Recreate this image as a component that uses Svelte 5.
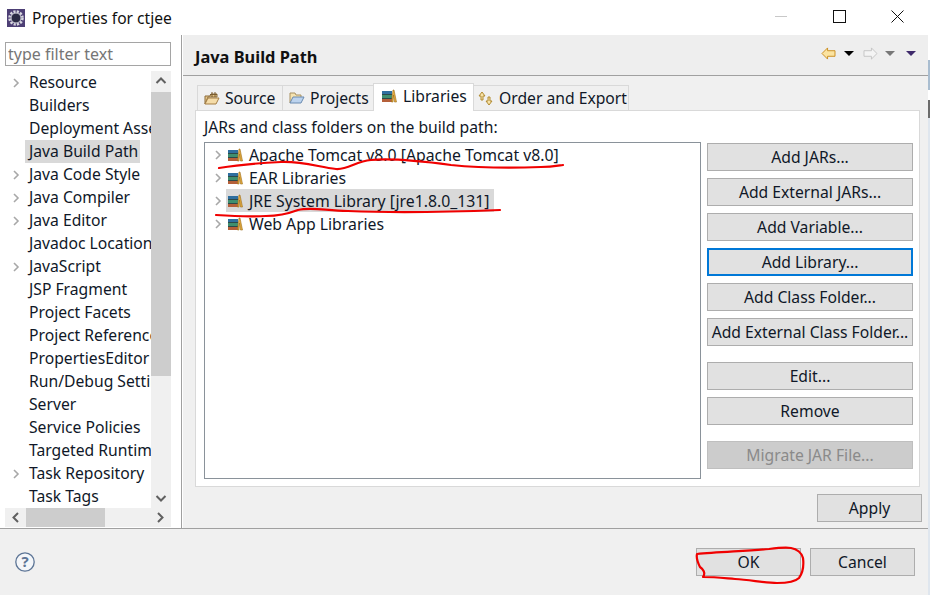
<script>
  // Preference tree on the left, build path page on the right
  const tree = [
    { name: 'Resource', arrow: true },
    { name: 'Builders' },
    { name: 'Deployment Assembly' },
    { name: 'Java Build Path', selected: true },
    { name: 'Java Code Style', arrow: true },
    { name: 'Java Compiler', arrow: true },
    { name: 'Java Editor', arrow: true },
    { name: 'Javadoc Location' },
    { name: 'JavaScript', arrow: true },
    { name: 'JSP Fragment' },
    { name: 'Project Facets' },
    { name: 'Project References' },
    { name: 'PropertiesEditor' },
    { name: 'Run/Debug Settings' },
    { name: 'Server' },
    { name: 'Service Policies' },
    { name: 'Targeted Runtimes' },
    { name: 'Task Repository', arrow: true },
    { name: 'Task Tags' }
  ];

  const libraries = [
    { name: 'Apache Tomcat v8.0 [Apache Tomcat v8.0]' },
    { name: 'EAR Libraries' },
    { name: 'JRE System Library [jre1.8.0_131]', selected: true },
    { name: 'Web App Libraries' }
  ];

  const buttonGroups = [
    [
      { label: 'Add JARs...' },
      { label: 'Add External JARs...' },
      { label: 'Add Variable...' },
      { label: 'Add Library...', focused: true },
      { label: 'Add Class Folder...' },
      { label: 'Add External Class Folder...' }
    ],
    [{ label: 'Edit...' }, { label: 'Remove' }],
    [{ label: 'Migrate JAR File...', disabled: true }]
  ];
</script>

{#snippet chevron()}
  <svg class="chevron" width="8" height="10" viewBox="0 0 8 10"><path d="M2 1l4 4-4 4" fill="none" stroke="#a8a8a8" stroke-width="1.6" /></svg>
{/snippet}

{#snippet books()}
  <svg class="books" width="16" height="14" viewBox="0 0 16 14">
    <rect x="1" y="10" width="10" height="3" fill="#b5603a" />
    <rect x="1" y="6" width="10" height="3" fill="#3f8f6f" />
    <rect x="1" y="2" width="10" height="3" fill="#2f6f9f" />
    <path d="M1 5.500h10M1 9.500h10" stroke="#2b4a4a" stroke-width="1" />
    <path d="M10.500 13L12 1h1l2.500 12h-2L12.500 6 12 13z" fill="#e6ad3c" stroke="#9a6c1c" stroke-width="0.600" />
  </svg>
{/snippet}

<div class="window">
  <div class="dialog">
    <header class="titlebar">
      <svg class="app-icon" width="18" height="18" viewBox="0 0 18 18">
        <rect width="18" height="18" fill="#4d3f75" />
        <circle cx="9" cy="9" r="6.500" fill="none" stroke="#d8d8e0" stroke-width="2.500" stroke-dasharray="2.200 1.200" />
        <circle cx="9" cy="9" r="5" fill="#2a2a44" stroke="#cfcfd8" stroke-width="1" />
      </svg>
      <span class="title">Properties for ctjee</span>
      <div class="window-controls">
        <span class="minimize"></span>
        <span class="maximize"></span>
        <svg width="13" height="13" viewBox="0 0 13 13"><path d="M.5.500l12 12M12.500.500l-12 12" stroke="#111" stroke-width="1" /></svg>
      </div>
    </header>

    <div class="main">
      <aside class="sidebar">
        <input class="filter" placeholder="type filter text" readonly />
        <div class="tree-wrap">
          <ul class="tree">
            {#each tree as item}
              <li class="tree-row">
                <span class="arrow-slot">
                  {#if item.arrow}{@render chevron()}{/if}
                </span>
                <span class="tree-label" class:selected={item.selected}>{item.name}</span>
              </li>
            {/each}
          </ul>
          <div class="vscroll">
            <svg class="scroll-btn" width="20" height="21" viewBox="0 0 20 21"><path d="M5.500 12l4.500-4.500 4.500 4.500" fill="none" stroke="#606060" stroke-width="2" /></svg>
            <div class="vthumb"></div>
            <div class="spacer"></div>
            <svg class="scroll-btn" width="20" height="21" viewBox="0 0 20 21"><path d="M5.500 9l4.500 4.500 4.500-4.500" fill="none" stroke="#606060" stroke-width="2" /></svg>
          </div>
          <div class="hscroll">
            <svg width="21" height="19" viewBox="0 0 21 19"><path d="M13 5l-4.500 4.500 4.500 4.500" fill="none" stroke="#606060" stroke-width="2" /></svg>
            <div class="hthumb"></div>
            <div class="spacer"></div>
            <svg width="21" height="19" viewBox="0 0 21 19"><path d="M8 5l4.500 4.500-4.500 4.500" fill="none" stroke="#606060" stroke-width="2" /></svg>
          </div>
        </div>
      </aside>

      <section class="page">
        <div class="page-header">
          <h1>Java Build Path</h1>
          <div class="nav-icons">
            <svg width="15" height="13" viewBox="0 0 16 14"><path d="M1 7l6-6v3h8v6H7v3z" fill="#fbe3a0" stroke="#c98a1a" stroke-width="1" /></svg>
            <span class="caret black"></span>
            <svg width="15" height="13" viewBox="0 0 16 14"><path d="M15 7L9 1v3H1v6h8v3z" fill="#f4f4f4" stroke="#c4c4c4" stroke-width="1" /></svg>
            <span class="caret gray"></span>
            <span class="caret purple"></span>
          </div>
        </div>

        <div class="page-body">
          <div class="tabs">
            <div class="tab source">
              <svg width="16" height="14" viewBox="0 0 16 14">
                <path d="M1 5h5l1-2h6v3H4l-3 7z" fill="#e8c98a" stroke="#8a6a3a" stroke-width="1" />
                <path d="M1 13l3-6h11l-3 6z" fill="#f5dca8" stroke="#a57f45" stroke-width="1" />
                <path d="M8 1v5M11 1v5M6 3.500h7" stroke="#7a5c30" stroke-width="1" fill="none" />
              </svg>
              Source
            </div>
            <div class="tab projects">
              <svg width="16" height="14" viewBox="0 0 16 14">
                <path d="M1 12V2h5l1 2h5v2" fill="#f5e3b0" stroke="#a89060" stroke-width="1" />
                <path d="M1 12l3-6h11l-3 6z" fill="#bcd3ee" stroke="#6a8ab0" stroke-width="1" />
              </svg>
              Projects
            </div>
            <div class="tab active">
              {@render books()}
              Libraries
            </div>
            <div class="tab order">
              <svg width="16" height="15" viewBox="0 0 16 15">
                <path d="M4 1L1 5h2v4h2V5h2z" fill="#f8e3a8" stroke="#b08a30" stroke-width="1" />
                <path d="M11 14l3-4h-2V6h-2v4H8z" fill="#f8e3a8" stroke="#b08a30" stroke-width="1" />
              </svg>
              Order and Export
            </div>
          </div>

          <div class="panel">
            <div class="panel-caption">JARs and class folders on the build path:</div>
            <div class="panel-content">
              <ul class="libraries">
                {#each libraries as lib}
                  <li class="lib-row">
                    {@render chevron()}
                    <span class="lib-item" class:selected={lib.selected}>
                      {@render books()}
                      {lib.name}
                    </span>
                  </li>
                {/each}
              </ul>
              <div class="buttons">
                {#each buttonGroups as group}
                  <div class="button-group">
                    {#each group as b}
                      <button class="btn wide" class:focused={b.focused} class:disabled={b.disabled}>{b.label}</button>
                    {/each}
                  </div>
                {/each}
              </div>
            </div>
          </div>

          <div class="apply-row">
            <button class="btn action">Apply</button>
          </div>
        </div>
      </section>
    </div>

    <footer class="footer">
      <svg class="help" width="20" height="20" viewBox="0 0 20 20">
        <circle cx="10" cy="10" r="9.200" fill="#f4f6f9" stroke="#5d7596" stroke-width="1.300" />
        <text x="10" y="15" text-anchor="middle" class="help-mark">?</text>
      </svg>
      <div class="footer-actions">
        <button class="btn action">OK</button>
        <button class="btn action">Cancel</button>
      </div>
    </footer>
  </div>
  <div class="edge"></div>

  <!-- the red pen marks were drawn over the screenshot -->
  <svg class="ink" width="930" height="595" viewBox="0 0 930 595">
    <g fill="none" stroke="#f00000" stroke-width="2.200" stroke-linecap="round" stroke-linejoin="round">
      <path d="M219 168c18-3 40-5 62-6 20-1 38 5 55 7 12 1 20-8 35-9 22-2 50 1 80 5 30 3 62 3 90 2 10 0 15-1 22-2" />
      <path d="M216 215c14 1 34 2 50 1 14 0 24-3 32-6 12-3 24 0 50 1 50 2 100 1 152-1" />
      <path d="M697 554c20-2 50-3 72-5 8-1 16-2 22-1 6 1 11 5 12 10 1 8-1 16-4 20-3 3-10 5-22 5-12 0-26-3-42-4-12-1-20-2-32-2 3-4 0-8-3-10-2-4-4-9-3-13z" />
    </g>
  </svg>
</div>

<style>
  :global(body) {
    margin: 0;
    background: #fff;
  }

  .window {
    position: relative;
    display: flex;
    width: 930px;
    height: 595px;
    overflow: hidden;
    font-family: "Noto Sans", "Open Sans", sans-serif;
    font-size: 15.700px;
    color: #101828;
  }

  .dialog {
    display: flex;
    flex-direction: column;
    flex: 1;
    min-width: 0;
  }

  .edge {
    width: 2px;
    background: linear-gradient(#fff 0 60px, #a9bdd0 60px 90px, #fff 90px 100px, #6b6b6b 100px 118px, #dfe6ee 118px 595px);
  }

  .titlebar {
    display: flex;
    align-items: center;
    height: 35px;
    padding-left: 7px;
    background: #fff;
  }

  .app-icon {
    margin-right: 7px;
  }

  .title {
    font-size: 15.600px;
    color: #111;
  }

  .window-controls {
    display: flex;
    align-items: center;
    margin-left: auto;
    padding: 0 24px 3px 0;
  }

  .minimize {
    width: 12px;
    height: 1px;
    background: #c8c8c8;
    margin-right: 46px;
  }

  .maximize {
    width: 11px;
    height: 11px;
    border: 1px solid #111;
    margin-right: 45px;
  }

  .main {
    display: flex;
    height: 493px;
    border-bottom: 1px solid #a0a0a0;
  }

  .sidebar {
    width: 182px;
    flex-shrink: 0;
    padding: 7px 10px 0 5px;
    box-sizing: border-box;
    background: #fff;
    border-right: 1px solid #a0a0a0;
  }

  .filter {
    display: block;
    width: 166px;
    height: 24px;
    box-sizing: border-box;
    padding: 0 2px;
    border: 1px solid #a5a5a5;
    outline: none;
    font: inherit;
    font-size: 16px;
  }

  .filter::placeholder {
    color: #767676;
    opacity: 1;
  }

  .tree-wrap {
    display: grid;
    grid-template-columns: 146px 20px;
    grid-template-rows: 437px 19px;
    margin-top: 5px;
    width: 166px;
  }

  .tree {
    list-style: none;
    margin: 0;
    padding: 0;
    overflow: hidden;
  }

  .tree-row {
    display: flex;
    align-items: center;
    height: 23px;
    white-space: nowrap;
  }

  .arrow-slot {
    display: flex;
    justify-content: center;
    flex: none;
    width: 20px;
    padding-left: 2px;
    box-sizing: border-box;
    margin-right: 4px;
  }

  .tree-label {
    padding: 0 2px 0 4px;
    margin-left: -4px;
    line-height: 23px;
  }

  .tree-label.selected {
    background: #d9d9d9;
  }

  .vscroll {
    display: flex;
    flex-direction: column;
    background: #f0f0f0;
  }

  .scroll-btn {
    flex: none;
    display: block;
  }

  .vthumb {
    height: 284px;
    background: #cdcdcd;
  }

  .spacer {
    flex: 1;
  }

  .hscroll {
    grid-column: 1 / 3;
    display: flex;
    background: #f0f0f0;
  }

  .hthumb {
    width: 79px;
    background: #cdcdcd;
  }

  .page {
    flex: 1;
    min-width: 0;
    margin-left: 1px;
    background: #f0f0f0;
  }

  .page-header {
    display: flex;
    align-items: center;
    justify-content: space-between;
    height: 41px;
    box-sizing: border-box;
    padding: 0 12px;
    border-bottom: 1px solid #a0a0a0;
    margin-bottom: 8px;
    background: #eeeeee;
  }

  .page-header h1 {
    margin: 3px 0 0;
    font-size: 16.400px;
    font-weight: 700;
    color: #111;
  }

  .nav-icons {
    display: flex;
    align-items: center;
    gap: 8px;
    margin-bottom: 4px;
  }

  .caret {
    width: 0;
    height: 0;
    border-left: 5px solid transparent;
    border-right: 5px solid transparent;
    border-top: 5px solid #000;
    margin-right: 1px;
  }

  .caret.gray {
    border-top-color: #777;
    margin-left: -1px;
    margin-right: 3px;
  }

  .caret.purple {
    border-top-color: #3f2a6b;
    margin-right: 0;
  }

  .page-body {
    padding-left: 12px;
    padding-right: 6px;
  }

  .tabs {
    display: flex;
    align-items: flex-end;
    height: 26px;
    padding-left: 2px;
  }

  .tab {
    display: flex;
    align-items: center;
    gap: 5px;
    height: 25px;
    box-sizing: border-box;
    background: #f0f0f0;
    border: 1px solid #d9d9d9;
    border-bottom: none;
    margin-right: -1px;
    white-space: nowrap;
  }

  .tab.source {
    width: 86px;
    padding-left: 6px;
  }

  .tab.projects {
    width: 92px;
    padding-left: 6px;
  }

  .tab.order {
    width: 156px;
    padding-left: 4px;
  }

  .tab.active {
    width: 101px;
    height: 28px;
    padding: 0 0 3px 7px;
    gap: 6px;
    background: #fff;
    position: relative;
    z-index: 1;
    margin-bottom: -1px;
  }

  .panel {
    height: 377px;
    margin-right: 2px;
    box-sizing: border-box;
    background: #fff;
    border: 1px solid #d9d9d9;
    padding: 6px 0 0 8px;
  }

  .panel-caption {
    height: 22px;
    line-height: 20px;
  }

  .panel-content {
    display: flex;
    gap: 6px;
    margin-top: 3px;
  }

  .libraries {
    list-style: none;
    margin: 0;
    padding: 0 0 0 9px;
    width: 497px;
    height: 337px;
    flex: none;
    box-sizing: border-box;
    border: 1px solid #8a929a;
  }

  .lib-row {
    display: flex;
    align-items: center;
    height: 23px;
    white-space: nowrap;
  }

  .chevron {
    flex: none;
  }

  .lib-row .chevron {
    margin-right: 4px;
  }

  .lib-item {
    display: flex;
    align-items: center;
    gap: 6px;
    height: 23px;
    padding: 0 4px 0 1px;
    font-size: 15.800px;
  }

  .lib-item.selected {
    background: #d9d9d9;
  }

  .buttons {
    display: flex;
    flex-direction: column;
    gap: 16px;
    padding-top: 1px;
  }

  .button-group {
    display: flex;
    flex-direction: column;
    gap: 7px;
  }

  .btn {
    height: 28px;
    box-sizing: border-box;
    padding: 0;
    background: #e1e1e1;
    border: 1px solid #adadad;
    border-radius: 0;
    font: inherit;
    color: #101828;
  }

  .btn.wide {
    width: 206px;
  }

  .btn.focused {
    border: 2px solid #0078d7;
  }

  .btn.disabled {
    background: #cccccc;
    border-color: #bfbfbf;
    color: #8a8a8a;
  }

  .btn.action {
    width: 105px;
  }

  .apply-row {
    display: flex;
    justify-content: flex-end;
    padding-top: 7px;
  }

  .footer {
    flex: 1;
    display: flex;
    align-items: center;
    justify-content: space-between;
    padding: 0 13px 0 15px;
    background: #f0f0f0;
  }

  .help-mark {
    font-family: "Noto Sans", sans-serif;
    font-size: 15px;
    font-weight: 700;
    fill: #5d7596;
  }

  .footer-actions {
    display: flex;
    gap: 9px;
  }

  .ink {
    position: absolute;
    top: 0;
    left: 0;
    pointer-events: none;
  }
</style>
